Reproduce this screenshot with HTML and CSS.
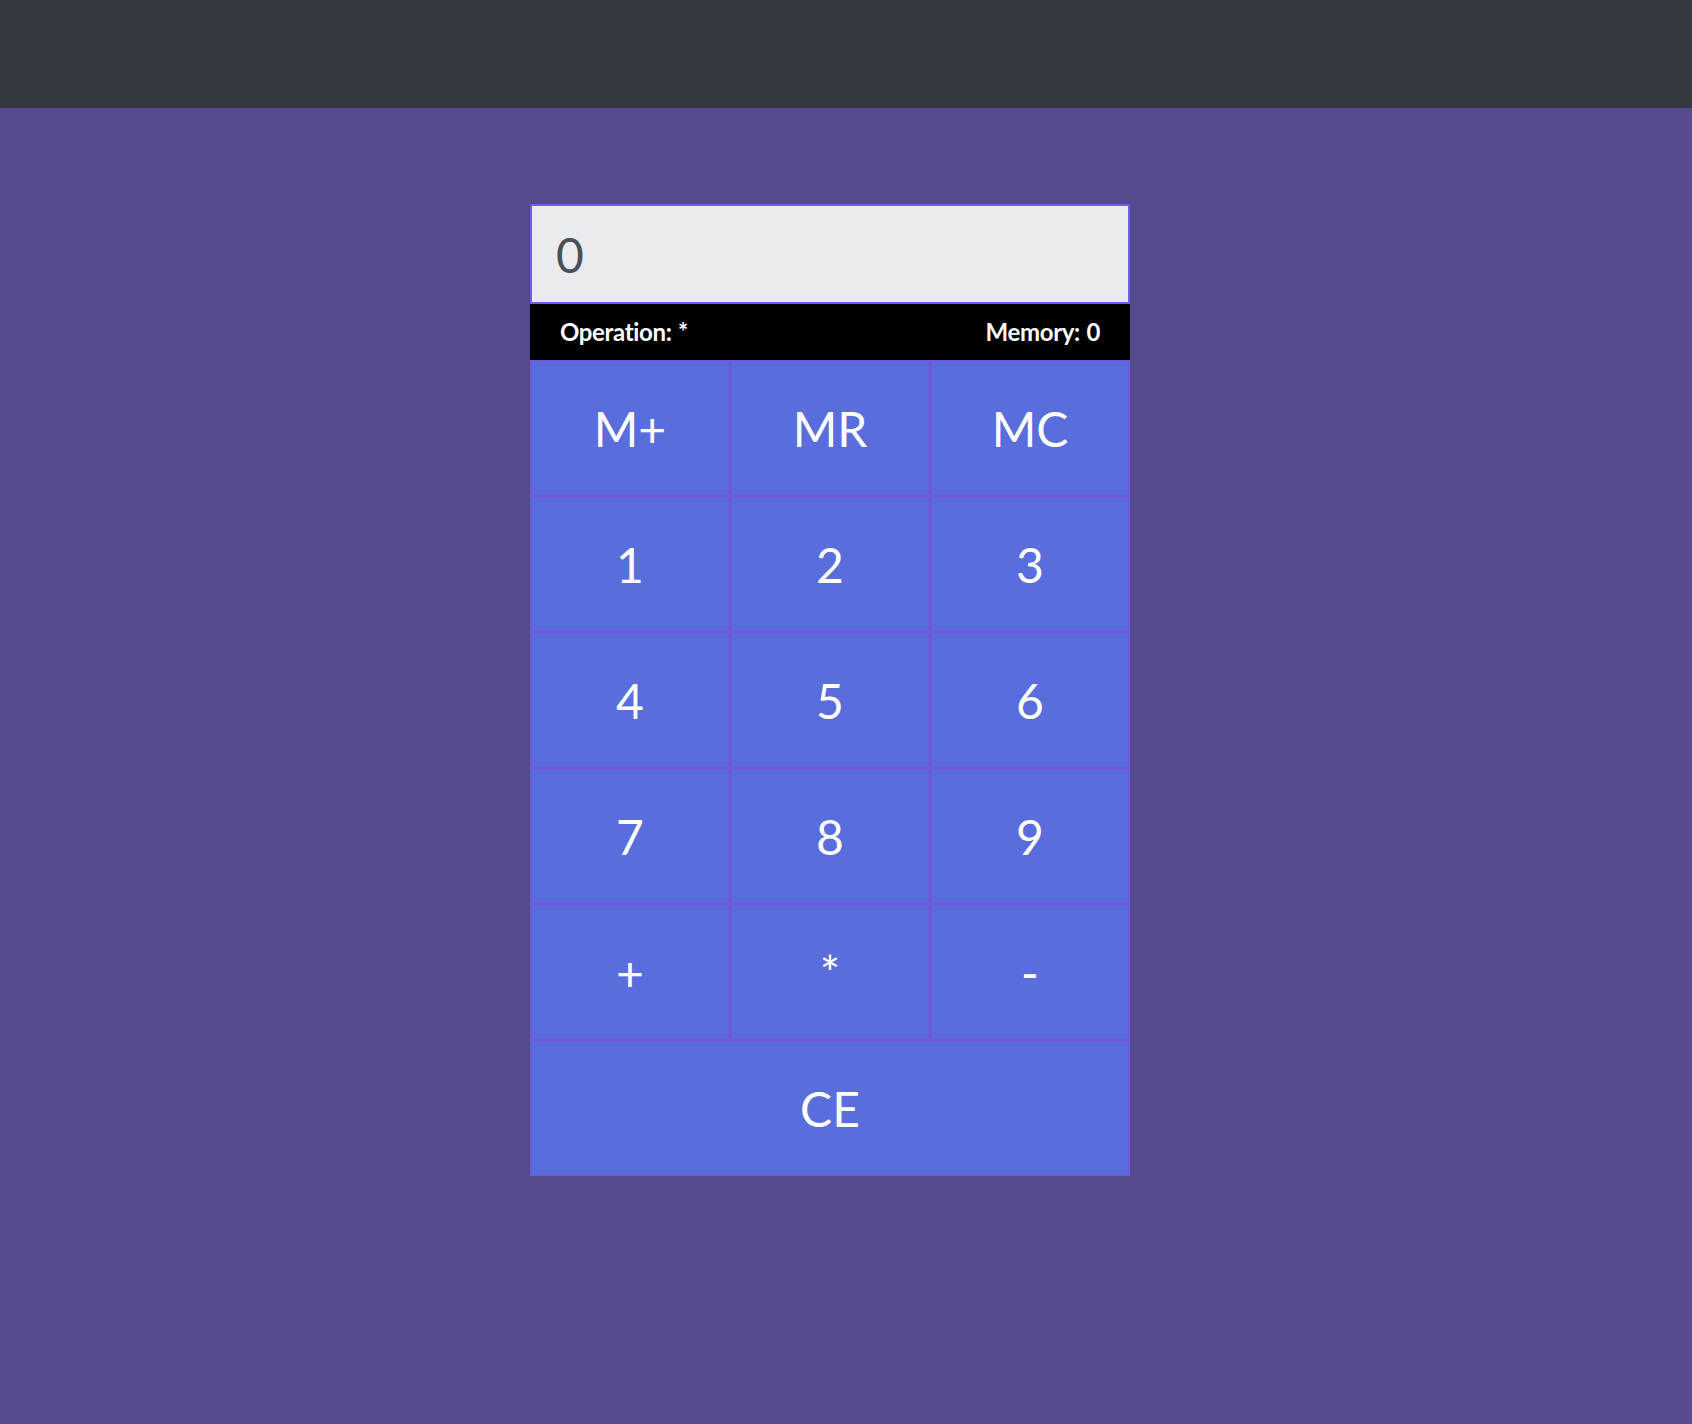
FILE: index.html
```html
<!DOCTYPE html>
<html lang="en">
<head>
<meta charset="utf-8">
<title>Calculator</title>
<link rel="stylesheet" href="styles.css">
</head>
<body>
<header class="topbar"></header>
<main class="stage">
  <section class="calc">
    <div class="display">0</div>
    <div class="status">
      <span>Operation: *</span>
      <span>Memory: 0</span>
    </div>
    <div class="keys">
      <button class="key">M+</button>
      <button class="key">MR</button>
      <button class="key">MC</button>
      <button class="key">1</button>
      <button class="key">2</button>
      <button class="key">3</button>
      <button class="key">4</button>
      <button class="key">5</button>
      <button class="key">6</button>
      <button class="key">7</button>
      <button class="key">8</button>
      <button class="key">9</button>
      <button class="key">+</button>
      <button class="key">*</button>
      <button class="key">-</button>
      <button class="key key-wide">CE</button>
    </div>
  </section>
</main>
</body>
</html>
```

FILE: styles.css
```css
html, body {
  margin: 0;
  padding: 0;
}

body {
  background: #554a8c;
  font-family: Lato, "Liberation Sans", sans-serif;
  min-height: 1424px;
}

.topbar {
  height: 108px;
  background: #353a40;
}

.stage {
  display: flex;
  justify-content: center;
  padding: 96px 32px 0 0;
}

.calc {
  width: 600px;
}

.display {
  box-sizing: border-box;
  height: 100px;
  border: 2px solid #6c5ce7;
  background: #eaebef;
  color: #4b5057;
  font-size: 48px;
  display: flex;
  align-items: center;
  padding-left: 24px;
}

.status {
  box-sizing: border-box;
  height: 56px;
  background: #000;
  color: #fff;
  font-weight: 700;
  font-size: 24px;
  letter-spacing: -0.35px;
  word-spacing: 1px;
  display: flex;
  justify-content: space-between;
  align-items: center;
  padding: 0 30px 2px 30px;
}

.keys {
  display: grid;
  grid-template-columns: repeat(3, 1fr);
  grid-auto-rows: 136px;
}

.key {
  box-sizing: border-box;
  margin: 0;
  border: 2px solid #6c5add;
  background: #5a6ddc;
  color: #fff;
  font-family: Lato, "Liberation Sans", sans-serif;
  font-size: 48px;
  font-weight: 400;
  padding: 0;
  cursor: pointer;
}

.key-wide {
  grid-column: 1 / -1;
}
```
